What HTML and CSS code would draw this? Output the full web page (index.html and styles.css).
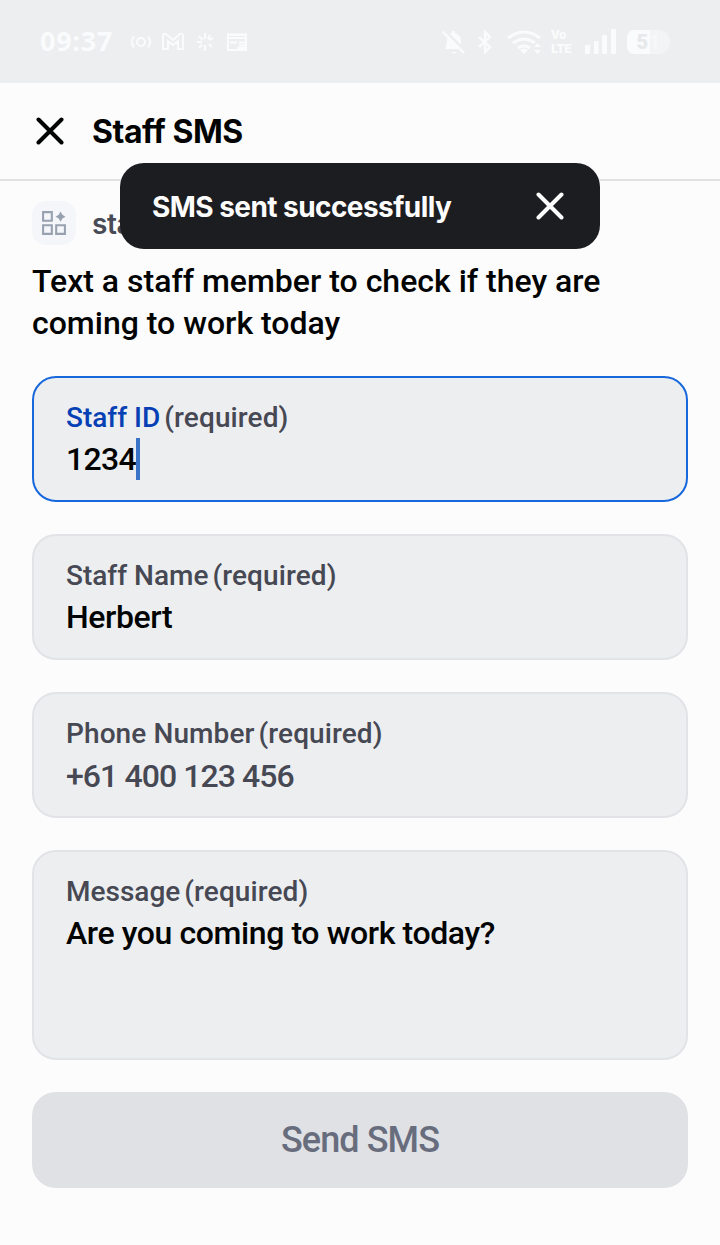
FILE: index.html
```html
<!DOCTYPE html>
<html lang="en">
<head>
<meta charset="utf-8">
<title>Staff SMS</title>
<link rel="stylesheet" href="styles.css">
</head>
<body>
<div class="status">
  <span class="clock">09:37</span>
  <svg class="status-left" width="118" height="24" viewBox="0 0 118 24" fill="none" stroke="currentColor" stroke-width="2">
    <circle cx="11" cy="12" r="4"/>
    <path d="M4 6.500Q-.5 12 4 17.500M18 6.500Q22.500 12 18 17.500"/>
    <path d="M33 19V5.500Q33 3 36 4L43 10L50 4Q53 3 53 5.500V19H48V11L43 15L38 11V19Z"/>
    <path d="M75 3V9M75 15V21M67 12H72M79 10L83 8M69 6L73 10M69 18L72 14.500M78 9L80 5M79 14L82 17" stroke-width="2.200"/>
    <path d="M98 5H116V20H98ZM98 8H116M100 12.500H107M109 12.500H115M109 15.500H115M107 18H115"/>
    <path d="M97 4H117" stroke-dasharray="2 1.500"/>
  </svg>
  <svg class="status-mid" width="100" height="30" viewBox="0 0 100 30" fill="none" stroke="currentColor" stroke-width="2.400">
    <path d="M4 22Q6 18 6 13Q6 7 11 6V4H14V6Q20 8 20 14V18L22 22ZM10 25H16Q13 28 10 25Z" fill="currentColor" stroke="none"/>
    <path d="M3 3L25 25" stroke="#edeef0" stroke-width="3"/>
    <path d="M1.500 4.500L23 26"/>
    <path d="M38 10L49 20L44 25V5L49 10L38 20"/>
    <path d="M67 11Q83-1 99 11M72 16Q83 8 94 16M77 21Q83 17 89 21" stroke-width="3"/>
    <path d="M79 23Q83 20 87 23L83 27ZM93 20L96.500 16L100 20ZM93 23H100L96.500 27Z" fill="currentColor" stroke="none"/>
  </svg>
  <span class="volte">Vo<br>LTE</span>
  <svg class="signal" width="31" height="25" viewBox="0 0 31 25" fill="currentColor">
    <rect y="16" width="5" height="9" rx="1"/><rect x="9" y="12" width="4.500" height="13" rx="1"/><rect x="17" y="6" width="5" height="19" rx="1"/><rect x="26" width="5" height="25" rx="1"/>
  </svg>
  <span class="battery"><b>5</b><i>1</i></span>
</div>

<header class="header">
  <svg class="close" width="28" height="28" viewBox="0 0 28 28"><path d="M2.500 2.500L25.500 25.500M25.500 2.500L2.500 25.500"/></svg>
  <h1 class="title">Staff SMS</h1>
</header>

<main class="content">
  <div class="app">
    <div class="app-icon">
      <svg width="24" height="24" viewBox="0 0 22 22" fill="none" stroke="#98a1b0" stroke-width="1.900">
        <path d="M1 1H9V9H1ZM1 13H9V21H1ZM13 13H21V21H13Z"/>
        <path d="M17 .5L18.700 3.500L21.500 5.200L18.700 6.900L17 9.900L15.300 6.900L12.500 5.200L15.300 3.500Z" fill="#98a1b0" stroke="none"/>
      </svg>
    </div>
    <span class="app-name">staff</span>
  </div>
  <p class="intro">Text a staff member to check if they are<br>coming to work today</p>
  <form class="form">
    <div class="field focused">
      <div class="label"><span class="name">Staff ID</span><span class="req">(required)</span></div>
      <div class="value num">1234<span class="caret"></span></div>
    </div>
    <div class="field">
      <div class="label"><span class="name">Staff Name</span><span class="req">(required)</span></div>
      <div class="value">Herbert</div>
    </div>
    <div class="field">
      <div class="label wide"><span class="name">Phone Number</span><span class="req">(required)</span></div>
      <div class="value phone">+61 400 123 456</div>
    </div>
    <div class="field tall">
      <div class="label"><span class="name">Message</span><span class="req">(required)</span></div>
      <div class="value">Are you coming to work today?</div>
    </div>
    <button class="send" type="button" disabled>Send SMS</button>
  </form>
</main>

<div class="toast">
  <span class="toast-text">SMS sent successfully</span>
  <svg class="close" width="28" height="28" viewBox="0 0 28 28"><path d="M2.500 2.500L25.500 25.500M25.500 2.500L2.500 25.500"/></svg>
</div>
</body>
</html>
```
FILE: styles.css
```css
* { box-sizing: border-box; }
body {
  margin: 0;
  height: 1245px;
  position: relative;
  overflow: hidden;
  background: #fcfcfd;
  color: #020303;
  font-family: Roboto, sans-serif;
  font-weight: 500;
}
.status {
  display: flex;
  align-items: center;
  height: 83px;
  padding: 0 50px 0 40px;
  background: #edeef0;
  color: #fafbfc;
}
.clock { width: 90px; padding-bottom: 2px; font: 700 27px "Open Sans", sans-serif; letter-spacing: .7px; }
.status-left { flex: none; }
.status-mid { flex: none; margin-left: 193px; }
.volte { margin-left: 10px; width: 24px; font: 900 13px/14px Roboto, sans-serif; letter-spacing: -.3px; }
.signal { flex: none; margin-left: 10px; }
.battery {
  display: flex;
  flex: none;
  align-items: center;
  justify-content: center;
  gap: 1px;
  width: 43px;
  height: 24px;
  margin-left: 11px;
  border-radius: 7px 12px 12px 7px;
  background: linear-gradient(90deg, #fafbfc 54%, #f3f4f5 54%);
  color: #e6e8ea;
  font: 700 20px Roboto, sans-serif;
}
.battery i { color: #f7f8f9; font-style: normal; }
.header {
  display: flex;
  align-items: center;
  gap: 28px;
  height: 98px;
  padding: 0 36px;
  border-bottom: 2px solid #e1e2e4;
}
.close { flex: none; fill: none; stroke: currentColor; stroke-width: 4; stroke-linecap: round; }
.title { margin: 0; font: 700 32px Inter, sans-serif; letter-spacing: -.45px; }
.content { padding: 20px 32px 0; }
.app { display: flex; align-items: center; gap: 16px; height: 44px; }
.app-icon {
  display: flex;
  align-items: center;
  justify-content: center;
  width: 44px;
  height: 44px;
  border-radius: 14px;
  background: #f4f6f9;
}
.app-name { padding-top: 1px; color: #484b56; font: 600 28px Inter, sans-serif; letter-spacing: -.5px; }
.intro { margin: 15px 0 32px; font-size: 32px; line-height: 42px; }
.form { display: flex; flex-direction: column; gap: 32px; }
.field {
  height: 126px;
  padding: 20px 32px;
  border: 2px solid #e1e3e6;
  border-radius: 24px;
  background: #edeef0;
}
.focused { border-color: #1668dc; }
.tall { height: 210px; }
.label { display: flex; gap: 4px; color: #464853; font-size: 28px; line-height: 40px; white-space: nowrap; }
.req { letter-spacing: .1px; }
.wide { letter-spacing: .1px; }
.focused .name { color: #0740b5; }
.value { display: flex; align-items: center; height: 42px; font-size: 32px; line-height: 42px; letter-spacing: -.4px; white-space: nowrap; }
.num { letter-spacing: -.7px; }
.phone { padding-top: 2px; color: #464853; letter-spacing: -.92px; }
.caret { width: 4px; height: 42px; background: #3974c9; }
.send {
  height: 96px;
  padding: 0;
  border: 0;
  border-radius: 24px;
  background: #e0e1e5;
  color: #686d7e;
  font: 500 36px Roboto, sans-serif;
  letter-spacing: -.9px;
}
.toast {
  position: absolute;
  left: 120px;
  top: 163px;
  display: flex;
  align-items: center;
  justify-content: space-between;
  width: 480px;
  height: 86px;
  padding: 0 36px 0 32px;
  border-radius: 24px;
  background: #1c1d21;
  color: #fcfcfd;
}
.toast-text { padding-top: 1px; font: 700 28px Inter, sans-serif; letter-spacing: -.56px; white-space: nowrap; }
```
